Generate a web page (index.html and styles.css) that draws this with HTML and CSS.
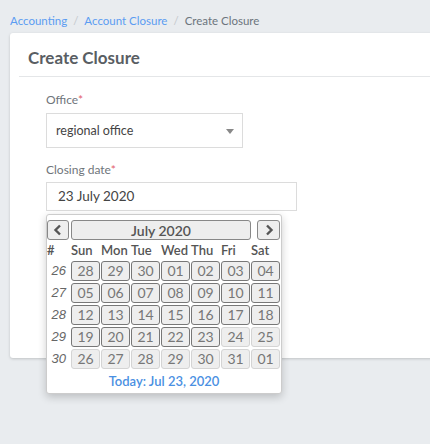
FILE: index.html
```html
<!DOCTYPE html>
<html>
<head>
<meta charset="utf-8">
<link rel="stylesheet" href="styles.css">
</head>
<body>
<nav class="breadcrumb">
  <a class="crumb-link">Accounting</a><span class="sep">/</span><a class="crumb-link">Account Closure</a><span class="sep">/</span><span class="crumb-current">Create Closure</span>
</nav>
<section class="card">
  <header class="card-header"><h1 class="card-title">Create Closure</h1></header>
  <form class="form">
    <label class="field-label">Office<span class="req">*</span></label>
    <div class="select">
      <span class="select-value">regional office</span>
      <span class="select-arrow"></span>
    </div>
    <label class="field-label date-label">Closing date<span class="req">*</span></label>
    <div class="date-wrap">
      <div class="date-input">23 July 2020</div>
      <div class="calendar">
        <div class="cal-nav">
          <button type="button" class="nav-btn prev"><svg width="10" height="12" viewBox="0 0 10 12"><path d="M7 1.5 L2.5 6 L7 10.5" fill="none" stroke="#555" stroke-width="2.4"/></svg></button>
          <button type="button" class="nav-btn month">July 2020</button>
          <button type="button" class="nav-btn next"><svg width="10" height="12" viewBox="0 0 10 12"><path d="M3 1.5 L7.5 6 L3 10.5" fill="none" stroke="#555" stroke-width="2.4"/></svg></button>
        </div>
        <div class="cal-grid">
          <div class="dow wk">#</div><div class="dow">Sun</div><div class="dow">Mon</div><div class="dow">Tue</div><div class="dow">Wed</div><div class="dow">Thu</div><div class="dow">Fri</div><div class="dow">Sat</div>

          <div class="wk-num">26</div><div class="day dk">28</div><div class="day dk">29</div><div class="day dk">30</div><div class="day dk">01</div><div class="day dk">02</div><div class="day dk">03</div><div class="day dk">04</div>
          <div class="wk-num">27</div><div class="day dk">05</div><div class="day dk">06</div><div class="day dk">07</div><div class="day dk">08</div><div class="day dk">09</div><div class="day dk">10</div><div class="day dk">11</div>
          <div class="wk-num">28</div><div class="day dk">12</div><div class="day dk">13</div><div class="day dk">14</div><div class="day dk">15</div><div class="day dk">16</div><div class="day dk">17</div><div class="day dk">18</div>
          <div class="wk-num">29</div><div class="day dk">19</div><div class="day dk">20</div><div class="day dk">21</div><div class="day dk">22</div><div class="day dk">23</div><div class="day">24</div><div class="day">25</div>
          <div class="wk-num">30</div><div class="day">26</div><div class="day">27</div><div class="day">28</div><div class="day">29</div><div class="day">30</div><div class="day">31</div><div class="day">01</div>
        </div>
        <div class="today">Today: Jul 23, 2020</div>
      </div>
    </div>
  </form>
</section>
</body>
</html>
```
FILE: styles.css
```css
* { box-sizing: border-box; }
html, body { margin: 0; }
body {
  background: #e9ecef;
  font-family: Lato, "Open Sans", sans-serif;
  color: #555;
  width: 430px;
  height: 444px;
  overflow: hidden;
}
.breadcrumb {
  height: 33px;
  padding: 13px 10px 0;
  font-size: 11.5px;
  line-height: 15px;
  white-space: nowrap;
}
.crumb-link { color: #5b9cf2; }
.sep { color: #c4c8cc; margin: 0 6px; }
.crumb-current { color: #6c757d; }
.card {
  margin-left: 10px;
  width: 440px;
  height: 325px;
  background: #fff;
  border-radius: 3px 0 0 3px;
  box-shadow: 0 1px 3px rgba(0,0,0,0.18);
}
.card-header {
  margin-left: 9px;
  height: 44px;
  padding: 15px 9px 0;
  border-bottom: 1px solid #e4e6e8;
}
.card-title {
  margin: 0;
  font-size: 17px;
  line-height: 20px;
  font-weight: 700;
  color: #595e63;
}
.form {
  padding: 15px 0 0 36px;
  display: flex;
  flex-direction: column;
  align-items: flex-start;
}
.field-label {
  font-size: 12px;
  line-height: 16px;
  color: #6f757b;
  margin-bottom: 5px;
}
.req { color: #e2606a; }
.date-label { margin-top: 14px; margin-bottom: 4px; }
.select {
  width: 197px;
  height: 35px;
  border: 1px solid #dcdcdc;
  display: flex;
  align-items: center;
  justify-content: space-between;
  padding: 0 8px 0 9px;
  font-size: 12.5px;
  color: #444;
}
.select-arrow {
  width: 0; height: 0;
  border-left: 4px solid transparent;
  border-right: 4px solid transparent;
  border-top: 5px solid #888;
  margin-top: 1px;
}
.date-wrap { position: relative; }
.date-input {
  width: 251px;
  height: 29px;
  border: 1px solid #dcdcdc;
  padding: 0 11px;
  font-size: 13.5px;
  line-height: 27px;
  color: #444;
}
.calendar {
  position: absolute;
  top: 32px;
  left: 0;
  width: 236px;
  height: 180px;
  background: #fff;
  border: 1px solid #ccc;
  border-radius: 3px;
  box-shadow: 0 3px 8px rgba(0,0,0,0.2);
  padding: 5px 0 0 0;
}
.cal-nav {
  display: flex;
  height: 20px;
}
.nav-btn {
  height: 20px;
  padding: 0;
  margin: 0;
  background: #eee;
  border: 1px solid #888;
  border-radius: 3px;
  font-family: inherit;
  color: #555;
  display: flex;
  align-items: center;
  justify-content: center;
}
.prev { width: 22px; }
.month { width: 180px; margin-left: 2px; font-size: 14px; font-weight: 600; }
.next { width: 23px; margin-left: 6px; }
.cal-grid {
  display: grid;
  grid-template-columns: 23px repeat(7, 29px);
  grid-template-rows: 18px repeat(5, 20px);
  column-gap: 1px;
  row-gap: 2px;
  margin-top: 1px;
}
.dow {
  font-size: 13px;
  font-weight: 600;
  color: #555;
  line-height: 18px;
  white-space: nowrap;
}
.wk-num {
  font-family: "Liberation Sans", "DejaVu Sans", sans-serif;
  font-style: italic;
  font-size: 13px;
  color: #666;
  text-align: right;
  padding-right: 4px;
  line-height: 20px;
}
.day {
  background: #eee;
  border: 1px solid #d4d4d4;
  border-radius: 3px;
  font-size: 14px;
  color: #777;
  text-align: center;
  line-height: 18px;
}
.day.dk { border-color: #777; }
.today {
  margin-top: 3px;
  text-align: center;
  font-size: 13px;
  font-weight: 600;
  line-height: 18px;
  color: #4a90e2;
}
```
